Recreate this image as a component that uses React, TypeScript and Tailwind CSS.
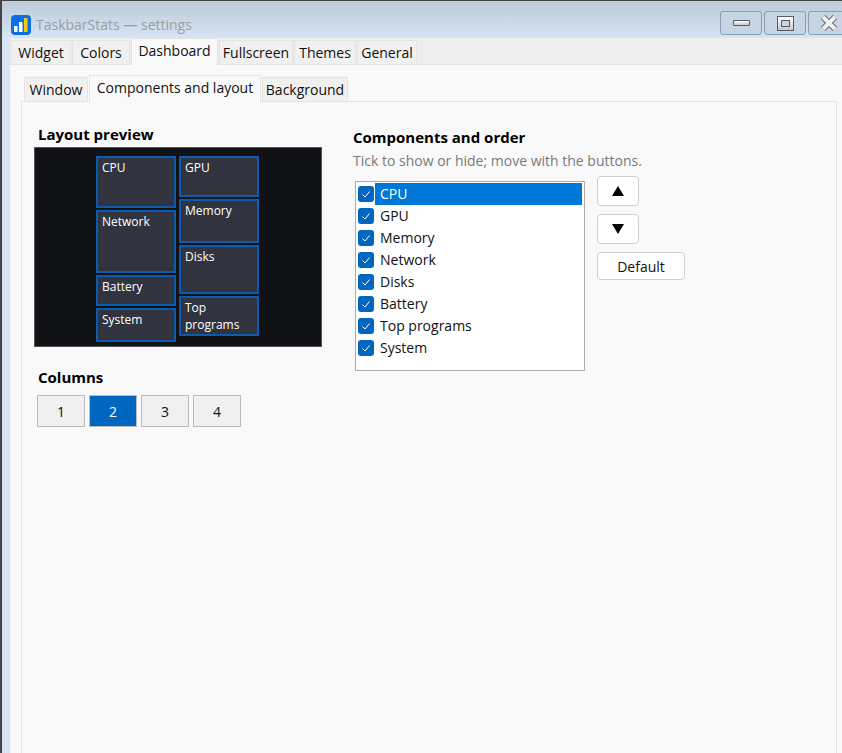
const font = { fontFamily: '"Open Sans", "Noto Sans", sans-serif' };

const outerTabs = [
  { label: "Widget", w: "w-[60px]" },
  { label: "Colors", w: "w-[58px]" },
  { label: "Dashboard", w: "w-[87px]", active: true },
  { label: "Fullscreen", w: "w-[74px]" },
  { label: "Themes", w: "w-[62px]" },
  { label: "General", w: "w-[60px]" },
];

const innerTabs = [
  { label: "Window", w: "w-[64px]" },
  { label: "Components and layout", w: "w-[172px]", active: true },
  { label: "Background", w: "w-[86px]" },
];

const components = ["CPU", "GPU", "Memory", "Network", "Disks", "Battery", "Top programs", "System"];

const Tab = ({ label, w, active }: { label: string; w: string; active?: boolean }) => (
  <div
    className={
      active
        ? `${w} h-[27px] -mb-px pt-[2px] bg-[#f9f9f9] border-x border-t border-[#e4e4e4] text-center text-[14px] leading-[20px] text-[#111] relative`
        : `${w} h-[24px] pt-[1px] bg-[#f0f0f0] border-x border-t border-[#e4e4e4] text-center text-[14px] leading-[22px] text-[#111]`
    }
  >
    {label}
  </div>
);

const Tile = ({ label, h }: { label: string; h: string }) => (
  <div className={`${h} w-[80px] border-2 border-[#0a5cb0] bg-[#31343e] pl-[4px] pt-[1px] text-[12px] leading-[17px] text-white`}>
    {label}
  </div>
);

const AppIcon = () => (
  <svg width="20" height="20" viewBox="0 0 20 20">
    <rect width="20" height="20" rx="4" fill="#0a6fe0" />
    <rect x="3" y="11" width="3.5" height="6" fill="#fff" />
    <rect x="8" y="7" width="3.5" height="10" fill="#fff" />
    <rect x="13" y="3" width="3.5" height="14" fill="#f6c814" />
  </svg>
);

const Check = () => (
  <div className="flex h-4 w-4 shrink-0 items-center justify-center rounded-[3px] bg-[#0067c0]">
    <svg width="10" height="10" viewBox="0 0 10 10" fill="none" stroke="#fff" strokeWidth="1">
      <path d="M1.5 5.5 L4 8 L8.5 2.5" />
    </svg>
  </div>
);

const winBtn = "flex h-[24px] w-[42px] shrink-0 items-center justify-center rounded-[3px] border border-[#8b9db5] bg-[#c6d4e4]";

export default function App() {
  return (
    <div style={font} className="flex h-[753px] w-full flex-col overflow-hidden border-l-2 border-t border-[#444] bg-[#d6e4f3]">
      <div className="flex h-[37px] shrink-0 items-start justify-between bg-gradient-to-b from-[#bccada] to-[#d6e4f3] pl-[9px]">
        <div className="flex items-center gap-[5px] pt-[12px]">
          <AppIcon />
          <span className="text-[14px] leading-[24px] text-[#9b9ea3]">TaskbarStats — settings</span>
        </div>
        <div className="flex gap-[2px] pt-[10px] -mr-[8px]">
          <div className={winBtn}>
            <div className="h-[6px] w-[17px] rounded-[1px] border border-[#555c68] bg-gradient-to-b from-white to-[#c8c8c8]" />
          </div>
          <div className={winBtn}>
            <div className="flex h-[15px] w-[17px] items-center justify-center border border-[#555c68] bg-gradient-to-b from-white to-[#c8c8c8]">
              <div className="h-[7px] w-[9px] border border-[#555c68] bg-[#c6d4e4]" />
            </div>
          </div>
          <div className={winBtn}>
            <svg width="20" height="18" viewBox="0 0 20 18">
              <path d="M4 3 L16 15 M16 3 L4 15" stroke="#555c68" strokeWidth="6" />
              <path d="M4 3 L16 15 M16 3 L4 15" stroke="#f1f1f1" strokeWidth="4" />
            </svg>
          </div>
        </div>
      </div>

      <div className="flex flex-1 pl-2">
        <div className="flex min-w-0 flex-1 flex-col bg-[#f9f9f9]">
          <div className="flex h-[27px] shrink-0 items-end gap-px border-b border-[#e4e4e4] bg-[#eeeeee] pl-px">
            {outerTabs.map((t) => (
              <Tab key={t.label} {...t} />
            ))}
          </div>

          <div className="flex flex-1 flex-col pl-[11px] pr-[5px] pt-[9px]">
            <div className="flex h-[27px] shrink-0 items-end gap-px pl-[3px]">
              {innerTabs.map((t) => (
                <Tab key={t.label} {...t} />
              ))}
            </div>

            <div className="flex flex-1 border border-b-0 border-[#e4e4e4] bg-[#f9f9f9] pl-[12px]">
              <div className="w-[319px] shrink-0">
                <h2 className="mt-[22px] pl-[4px] text-[15px] font-bold leading-[20px] text-black">Layout preview</h2>
                <div className="mt-[3px] flex h-[200px] w-[288px] justify-center gap-[3px] border border-[#555] bg-[#111215] pr-[1px] pt-[8px]">
                  <div className="flex flex-col gap-[2px]">
                    <Tile label="CPU" h="h-[52px]" />
                    <Tile label="Network" h="h-[63px]" />
                    <Tile label="Battery" h="h-[31px]" />
                    <Tile label="System" h="h-[34px]" />
                  </div>
                  <div className="flex flex-col gap-[2px]">
                    <Tile label="GPU" h="h-[41px]" />
                    <Tile label="Memory" h="h-[44px]" />
                    <Tile label="Disks" h="h-[49px]" />
                    <Tile label="Top programs" h="h-[40px]" />
                  </div>
                </div>

                <h2 className="mt-[20px] pl-[4px] text-[15px] font-bold leading-[20px] text-black">Columns</h2>
                <div className="mt-[8px] flex gap-[4px] pl-[3px]">
                  {[1, 2, 3, 4].map((n) => (
                    <div
                      key={n}
                      className={
                        n === 2
                          ? "flex h-[32px] w-[48px] items-center justify-center border border-[#bbb] bg-[#0067c0] text-[14px] text-white"
                          : "flex h-[32px] w-[48px] items-center justify-center border border-[#bbb] bg-[#f0f0f0] text-[14px] text-[#111]"
                      }
                    >
                      {n}
                    </div>
                  ))}
                </div>
              </div>

              <div className="pt-[25px]">
                <h2 className="text-[15px] font-bold leading-[20px] text-black">Components and order</h2>
                <p className="mt-[4px] text-[14px] leading-[20px] text-[#7a7a7a]">Tick to show or hide; move with the buttons.</p>
                <div className="mt-[5px] flex">
                  <div className="ml-[2px] mt-[5px] h-[190px] w-[230px] border border-[#aaa] bg-white px-px pt-px">
                    {components.map((c, i) => (
                      <div key={c} className="flex h-[22px] items-center gap-px pl-[1px] pr-px">
                        <Check />
                        <div
                          className={
                            i === 0
                              ? "h-[22px] flex-1 bg-[#0078d7] pl-[5px] text-[14px] leading-[22px] text-white"
                              : "h-[22px] flex-1 pl-[5px] text-[14px] leading-[22px] text-[#111]"
                          }
                        >
                          {c}
                        </div>
                      </div>
                    ))}
                  </div>
                  <div className="ml-[12px] flex flex-col items-start gap-[8px]">
                    <div className="flex h-[30px] w-[42px] items-center justify-center rounded-[4px] border border-[#d0d0d0] bg-white">
                      <svg width="14" height="12" viewBox="0 0 14 12"><path d="M7 1 L13 11 L1 11 Z" fill="#000" /></svg>
                    </div>
                    <div className="flex h-[30px] w-[42px] items-center justify-center rounded-[4px] border border-[#d0d0d0] bg-white">
                      <svg width="14" height="12" viewBox="0 0 14 12"><path d="M1 1 L13 1 L7 11 Z" fill="#000" /></svg>
                    </div>
                    <div className="flex h-[28px] w-[88px] items-center justify-center rounded-[4px] border border-[#d0d0d0] bg-white text-[14px] text-[#111]">
                      Default
                    </div>
                  </div>
                </div>
              </div>
            </div>
          </div>
        </div>
      </div>
    </div>
  );
}
